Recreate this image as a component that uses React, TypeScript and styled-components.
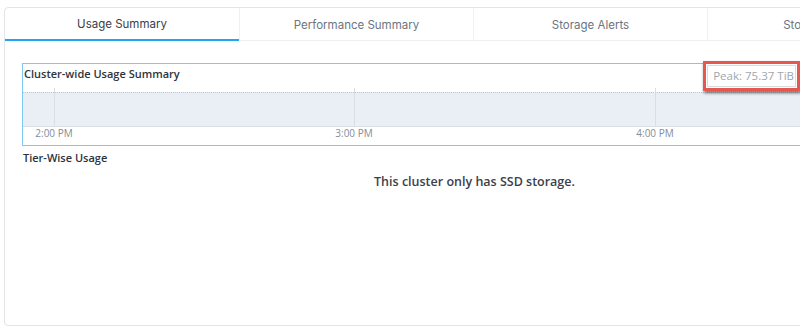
import React from "react";
import styled, { createGlobalStyle } from "styled-components";

const GlobalStyle = createGlobalStyle`
  html, body {
    margin: 0;
    padding: 0;
    background: #ffffff;
    overflow: hidden;
  }
  body {
    font-family: "Open Sans", Lato, Arial, sans-serif;
    color: #333a45;
  }
`;

const Page = styled.div`
  width: 800px;
  height: 332px;
  padding: 7px 0 0 4px;
  box-sizing: border-box;
  overflow: hidden;
`;

const Card = styled.div`
  width: 941px;
  height: 319px;
  box-sizing: border-box;
  border: 1px solid #e2e4e7;
  border-radius: 4px;
  background: #fff;
`;

const TabBar = styled.div`
  display: flex;
  height: 33px;
`;

const Tab = styled.div<{ $active?: boolean }>`
  width: 234px;
  box-sizing: border-box;
  display: flex;
  align-items: center;
  justify-content: center;
  font-family: Inter, "Open Sans", sans-serif;
  font-size: 11.5px;
  color: ${(p) => (p.$active ? "#39404a" : "#6c7480")};
  border-bottom: ${(p) => (p.$active ? "2px solid #22a5f0" : "1px solid #eef0f2")};
  border-left: ${(p) => (p.$active ? "none" : "1px solid #eef0f2")};
  padding-top: 1px;
`;

const Body = styled.div`
  padding: 22px 17px 0 17px;
`;

const ChartBox = styled.div`
  position: relative;
  width: 780px;
  height: 83px;
  box-sizing: border-box;
  border: 1px solid #7ec7f2;
  border-right: none;
`;

const ChartTitle = styled.div`
  font-size: 11px;
  font-weight: 600;
  color: #2d333b;
  padding: 2px 0 0 1px;
  height: 24px;
  box-sizing: border-box;
`;

const Plot = styled.svg`
  display: block;
`;

const PeakFrame = styled.div`
  position: absolute;
  top: -3px;
  right: 2px;
  padding: 1px;
  border: 3px solid #e5584f;
  box-shadow: 1px 2px 3px rgba(0, 0, 0, 0.55);
  background: #fff;
`;

const PeakLabel = styled.div`
  border: 1px solid #d8dde2;
  padding: 2px 1px 2px 5px;
  font-size: 11.5px;
  color: #9ea6b1;
  white-space: nowrap;
  line-height: 16px;
`;

const SectionTitle = styled.div`
  font-size: 11px;
  font-weight: 600;
  color: #2d333b;
  margin: 4px 0 0 1px;
`;

const EmptyNote = styled.div`
  text-align: center;
  font-size: 12.5px;
  font-weight: 600;
  color: #3a414b;
  margin-top: 8px;
`;

const ticks = [
  { x: 31, label: "2:00 PM" },
  { x: 331, label: "3:00 PM" },
  { x: 632, label: "4:00 PM" },
];

const tabs = ["Usage Summary", "Performance Summary", "Storage Alerts", "Storage Details"];

export default function App() {
  return (
    <>
      <GlobalStyle />
      <Page>
        <Card>
          <TabBar>
            {tabs.map((t, i) => (
              <Tab key={t} $active={i === 0}>
                {t}
              </Tab>
            ))}
          </TabBar>
          <Body>
            <ChartBox>
              <ChartTitle>Cluster-wide Usage Summary</ChartTitle>
              <Plot width="779" height="57" viewBox="0 0 779 57">
                <rect x="0" y="4" width="779" height="35" fill="#e9eff4" />
                <line x1="0" y1="4.5" x2="779" y2="4.5" stroke="#b7c9d8" strokeDasharray="1 1" />
                <line x1="0" y1="38.5" x2="779" y2="38.5" stroke="#d9dfe4" />
                {ticks.map((t) => (
                  <line key={t.label} x1={t.x + 0.5} y1="0" x2={t.x + 0.5} y2="39" stroke="#d9dee3" />
                ))}
                {ticks.map((t) => (
                  <text
                    key={t.label + "-t"}
                    x={t.x}
                    y="49"
                    textAnchor="middle"
                    fontSize="10"
                    fill="#858d97"
                    fontFamily="'Open Sans', sans-serif"
                  >
                    {t.label}
                  </text>
                ))}
              </Plot>
              <PeakFrame>
                <PeakLabel>Peak: 75.37 TiB</PeakLabel>
              </PeakFrame>
            </ChartBox>
            <SectionTitle>Tier-Wise Usage</SectionTitle>
            <EmptyNote>This cluster only has SSD storage.</EmptyNote>
          </Body>
        </Card>
      </Page>
    </>
  );
}
